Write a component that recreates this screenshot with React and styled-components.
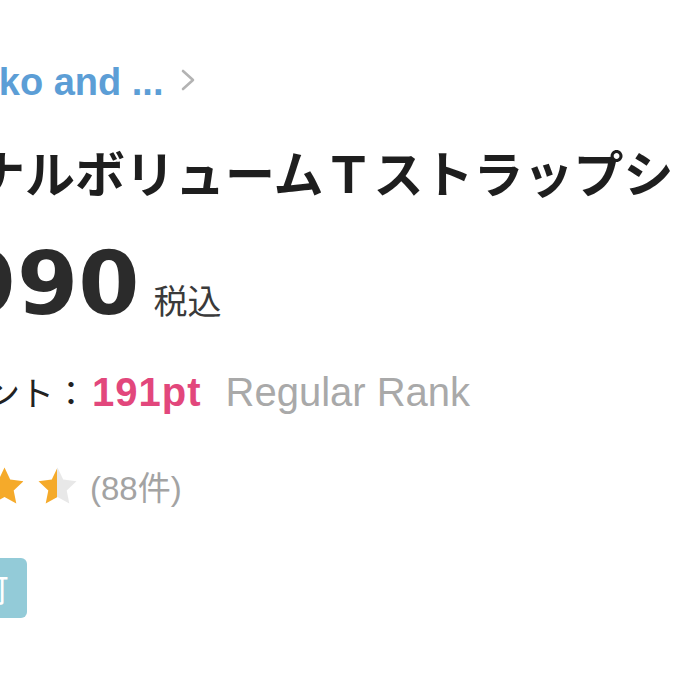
import styled, { createGlobalStyle } from 'styled-components';

const GlobalStyle = createGlobalStyle`
    html, body {
        margin: 0;
        padding: 0;
        background: #ffffff;
        overflow: hidden;
    }
`

const Page = styled.div`
    width: 675px;
    height: 675px;
    overflow: hidden;
    background: #ffffff;
`

const Column = styled.div`
    display: flex;
    flex-direction: column;
    margin-left: -175px;
    width: 1000px;
`

const Row = styled.div`
    display: flex;
    align-items: ${props => props.$align || 'center'};
    margin-top: ${props => props.$top || 0}px;
    padding-left: ${props => props.$indent || 0}px;
    white-space: nowrap;
`

const BrandLink = styled.a`
    font-family: "Liberation Sans", Arial, sans-serif;
    font-weight: 700;
    font-size: 38px;
    line-height: 40px;
    color: #5c9ed6;
    text-decoration: none;
`

const Chevron = styled.svg`
    margin-left: 18px;
    margin-top: -4px;
`

const Title = styled.h1`
    margin: 0;
    font-family: "Noto Sans CJK JP", "Noto Sans", sans-serif;
    font-weight: 700;
    font-size: 50px;
    line-height: 50px;
    color: #1e1e1e;
`

const Price = styled.span`
    font-family: "DejaVu Sans", sans-serif;
    font-weight: 700;
    font-size: 88px;
    line-height: 88px;
    color: #2b2b2b;

    small {
        font-size: 52px;
    }
`

const TaxNote = styled.span`
    margin-left: 14px;
    font-family: "Noto Sans CJK JP", sans-serif;
    font-size: 34px;
    color: #3a3a3a;
`

const PointLabel = styled.span`
    font-family: "Noto Sans CJK JP", sans-serif;
    font-size: 34px;
    line-height: 40px;
    color: #222222;
`

const PointValue = styled.span`
    margin-left: 4px;
    font-family: "Liberation Sans", Arial, sans-serif;
    font-weight: 700;
    font-size: 40px;
    line-height: 40px;
    color: #e2477c;
    letter-spacing: 1px;
`

const Rank = styled.span`
    margin-left: 24px;
    font-family: "Liberation Sans", Arial, sans-serif;
    font-size: 40px;
    line-height: 40px;
    color: #a9a9a9;
`

const Stars = styled.div`
    display: flex;
    gap: 12px;
`

const ReviewCount = styled.span`
    margin-left: 12px;
    font-family: "Liberation Sans", "Noto Sans CJK JP", sans-serif;
    font-size: 33px;
    color: #a3a3a3;
`

const Tag = styled.span`
    display: inline-flex;
    align-items: center;
    height: 60px;
    padding: 0 18px;
    border-radius: 6px;
    background: #93cbd8;
    font-family: "Noto Sans CJK JP", sans-serif;
    font-size: 32px;
    color: #ffffff;
`

const STAR = "M20.5 1.5 L26.2 13.6 L39.5 15.2 L29.7 24.4 L32.3 37.6 L20.5 31.1 L8.7 37.6 L11.3 24.4 L1.5 15.2 L14.8 13.6 Z";

const Star = ({ fill, id }) => (
    <svg width="41" height="40" viewBox="0 0 41 40">
        <defs>
            <linearGradient id={id} x1="0" x2="1" y1="0" y2="0">
                <stop offset={fill} stopColor="#f5aa2a" />
                <stop offset={fill} stopColor="#e8e8e8" />
            </linearGradient>
        </defs>
        <path d={STAR} fill={`url(#${id})`} strokeLinejoin="round" />
    </svg>
)

const rating = 4.5;

const App = () => {
    const stars = [0, 1, 2, 3, 4].map(i => Math.max(0, Math.min(1, rating - i)));

    return (
        <Page>
            <GlobalStyle />
            <Column>
                <Row $top={62} $indent={140}>
                    <BrandLink href="#">niko and ...</BrandLink>
                    <Chevron width="14" height="22" viewBox="0 0 14 22">
                        <polyline points="2,2 12,11 2,20" fill="none" stroke="#b3b3b3" strokeWidth="2.6" strokeLinecap="round" strokeLinejoin="round" />
                    </Chevron>
                </Row>
                <Row $top={44}>
                    <Title>オリジナルボリュームＴストラップシューズ</Title>
                </Row>
                <Row $top={44} $align="baseline">
                    <Price><small>¥</small>1,990</Price>
                    <TaxNote>税込</TaxNote>
                </Row>
                <Row $top={32} $indent={25} $align="baseline">
                    <PointLabel>獲得ポイント：</PointLabel>
                    <PointValue>191pt</PointValue>
                    <Rank>Regular Rank</Rank>
                </Row>
                <Row $top={50}>
                    <Stars>
                        {stars.map((f, i) => <Star key={i} id={`star-${i}`} fill={f} />)}
                    </Stars>
                    <ReviewCount>(88件)</ReviewCount>
                </Row>
                <Row $top={48} $indent={70}>
                    <Tag>予約可</Tag>
                </Row>
            </Column>
        </Page>
    )
}

export default App;
